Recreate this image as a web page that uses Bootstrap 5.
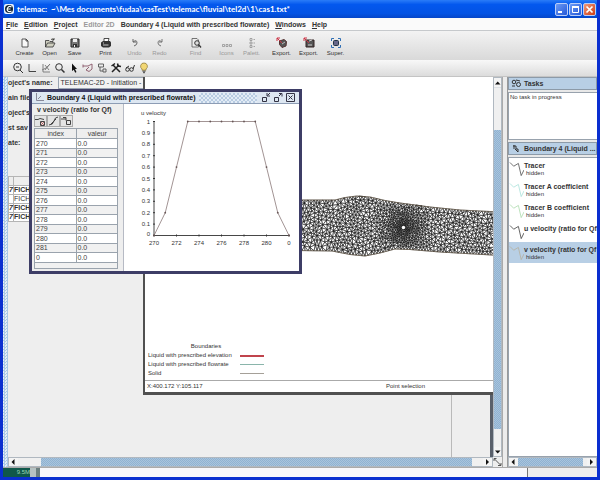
<!DOCTYPE html>
<html lang="en">
<head>
<meta charset="utf-8">
<meta name="viewport" content="width=device-width, initial-scale=1">
<title>telemac</title>
<link rel="stylesheet" href="https://cdn.jsdelivr.net/npm/bootstrap@5.3.0/dist/css/bootstrap.min.css">
<style>
  :root { --steel: #b8cfe5; --edge: #8a99a8; --frame: #3d3d66; --panel: #eeeeee; }
  body { font-family: "Liberation Sans", Arial, sans-serif; font-size: 7px; line-height: 9px; color: #333; background: var(--panel); }
  button, input { font-family: inherit; font-size: inherit; line-height: inherit; color: inherit; }
  button { background: none; border: 0; padding: 0; }
  svg { display: block; flex: none; }
  .app { height: 100vh; border: 3px solid #0a2fd0; border-top: 0; }
  .titlebar { height: 18px; margin: 0 -3px; padding: 0 4px; color: #fff; background: linear-gradient(#2a7cf8, #0358ee 25%, #0353e4 75%, #0546c8); }
  .titlebar h1 { font-family: Lato, "Liberation Sans", sans-serif; font-size: 8px; line-height: 12px; margin: 0 auto 0 3px; font-weight: bold; }
  .win-btns { gap: 1px; }
  .win-btn { width: 13px; height: 13px; border: 1px solid #b9cdf8; border-radius: 2px; background: linear-gradient(135deg, #6c9bf5, #2558d8); }
  .win-close { background: linear-gradient(135deg, #f09a7c, #cf3b12); }
  .menus { height: 13px; padding-left: 3px; gap: 6px; font-weight: bold; background: #fafafa; border-bottom: 1px solid #c6c9cc; }
  .menus u { text-underline-offset: 1px; }
  .dim { color: #999; }
  .tools { height: 29px; padding-left: 9px; background: linear-gradient(#f3f3f3, #d9d9d9); font-size: 6px; line-height: 8px; }
  .tools button { width: 25px; height: 29px; padding-top: 3px; }
  .tools .wide button { width: 27px; }
  .g6 { margin-left: 6px; } .g4 { margin-left: 4px; } .g11 { margin-left: 11px; }
  .minis { height: 17px; padding-left: 9px; background: linear-gradient(#f8f8f8, #dcdcdc); border-bottom: 1px solid #c4c4c4; }
  .minis button { width: 14px; height: 16px; }
  .grip { width: 5px; background: conic-gradient(#a9c9e6 25%, #e4eef6 0 50%, #a9c9e6 0 75%, #e4eef6 0) 0 0/3px 3px; }
  .desk { background: var(--panel); }
  .hatch { background: conic-gradient(#8fb2d2 25%, #a9c4dc 0 50%, #8fb2d2 0 75%, #a9c4dc 0) 0 0/2px 2px; }
  .sb { background: #f0f0f0; border: 1px solid #b0b8c0; }
  .sb button { background: #f4f4f4; }
  .hbar { height: 10px; } .hbar button { width: 9px; }
  .vbar { width: 9px; } .vbar button { height: 9px; }
  .split { width: 6px; background: #ececec; border-left: 1px solid #aaa; border-right: 1px solid #999; }
  .project { inset: 0; border-right: 3px solid #59606b; font-weight: bold; }
  .project .line { height: 15px; }
  .project .first { height: 11px; margin-bottom: 5px; gap: 6px; }
  .project input { height: 12px; width: 86px; border: 1px solid #9aa5b2; background: #f2f2f2; padding: 0 0 0 1px; }
  .files { width: 60px; border-collapse: collapse; margin-top: 23px; background: #fff; }
  .files th, .files td { height: 9px; line-height: 8px; padding: 0; border: 1px solid #b5b5b5; white-space: nowrap; }
  .files th { background: var(--panel); }
  .files .key { width: 5px; font-style: italic; }
  .plain { font-weight: normal; }
  .rule { left: 443px; top: 0; bottom: 0; width: 1px; background: #b9b9b9; }
  .view { left: 135px; right: 0; top: 0; height: 318px; background: #fff; border-left: 2px solid #505050; border-bottom: 3px solid #505050; font-size: 6px; line-height: 9px; }
  .mesh { width: 348px; height: 265px; }
  .legend { margin-left: 3px; width: 116px; }
  .legend i { width: 24px; height: 1px; background: #a5a098; }
  .legend i.elev { height: 2px; background: #c0444c; }
  .legend i.flow { background: #8ab5ab; }
  .viewbar { border-top: 1px solid #aaa; height: 12px; padding: 0 68px 0 2px; }
  .dialog { left: 21px; top: 12px; width: 273px; height: 185px; border: 3px solid var(--frame); background: #fff; }
  .dialog .cap { height: 12px; gap: 3px; padding: 0 3px; color: #111; background: #dde7f2; border-bottom: 1px solid #8d9db5; }
  .dialog h2, .side h2 { font-size: 7px; line-height: 10px; font-weight: bold; margin: 0; }
  .bumps { height: 10px; background: conic-gradient(#b8cce2 25%, #e3ecf6 0 50%, #b8cce2 0 75%, #e3ecf6 0) 0 0/4px 4px; }
  .cap button { width: 12px; height: 11px; }
  .data { width: 92px; background: var(--panel); border-right: 1px solid #b6bac4; padding: 1px 5px 0 2px; }
  .data h2 { padding-left: 3px; }
  .data button { width: 13px; height: 12px; border: 1px solid #aaa; background: #e4e4e4; }
  .values { width: 84px; border-collapse: collapse; margin-top: 1px; background: #fff; color: #444; }
  .values th, .values td { border: 1px solid #9aa3ad; padding: 0 0 0 1px; line-height: 8px; }
  .values th { background: var(--panel); font-weight: normal; text-align: center; line-height: 9px; }
  .values tr:nth-child(odd) td { line-height: 9px; }
  .values tr:nth-child(even) td { background: #f1f1f1; }
  .values .end td { height: 6px; background: var(--panel); }
  .side { width: 89px; background: #e8e8e8; }
  .side .head { height: 13px; padding-left: 2px; gap: 2px; background: var(--steel); border: 1px solid #8c9aa8; white-space: nowrap; }
  .side .box { background: #fff; border: 1px solid #98a2ad; border-right: 0; margin-top: 2px; }
  .tasks { height: 48px; margin-bottom: 2px; padding: 1px; font-size: 6px; line-height: 7px; }
  .curve { height: 21px; padding-top: 3px; text-align: left; white-space: nowrap; line-height: 9px; }
  .curve small { display: block; font-size: 6px; line-height: 7px; padding-left: 2px; }
  .curve b { display: block; }
  .curve.on { background: var(--steel); }
  .status { height: 10px; background: #f7f7fb; border-top: 1px solid #aaa; }
  .mem { width: 37px; background: #6c8080; color: #9fd6b8; font-size: 6px; }
  .mem .used { width: 27px; background: #10584a; } .mem .slack { width: 6px; background: #b6c2c2; }
  .tail { width: 70px; background: var(--panel); border-left: 1px solid #777; }
</style>
<script src="https://cdn.jsdelivr.net/npm/bootstrap@5.3.0/dist/js/bootstrap.bundle.min.js"></script>
</head>
<body>
<div class="app d-flex flex-column overflow-hidden">
  <header class="titlebar d-flex align-items-center flex-shrink-0">
    <svg width="10" height="10" viewBox="0 0 10 10"><rect width="10" height="10" rx="2" fill="#e8f0ff"/><circle cx="5" cy="5" r="4" fill="#123"/><path d="M7.500 3Q5 1.500 3.500 4 2.500 6.500 4.500 7.500 6 8 7.500 7M3.500 5h3" stroke="#fff" fill="none" stroke-width="1.200"/></svg>
    <h1 class="text-nowrap">telemac:&nbsp; ~\Mes documents\fudaa\casTest\telemac\fluvial\tel2d\1\cas1.txt*</h1>
    <div class="win-btns d-flex">
      <button class="win-btn" aria-label="Minimize"><svg width="11" height="11"><path d="M2 8h4" stroke="#fff" stroke-width="2"/></svg></button>
      <button class="win-btn" aria-label="Maximize"><svg width="11" height="11"><path d="M2.500 2.500v6h6v-6" stroke="#fff" fill="none"/><path d="M2 3h7" stroke="#fff" stroke-width="2"/></svg></button>
      <button class="win-btn win-close" aria-label="Close"><svg width="11" height="11"><path d="M2.500 2.500l6 6M8.500 2.500l-6 6" stroke="#fff" stroke-width="1.700"/></svg></button>
    </div>
  </header>
  <nav class="menus d-flex align-items-center flex-shrink-0 text-nowrap">
    <button class="fw-bold"><u>F</u>ile</button><button class="fw-bold"><u>E</u>dition</button><button class="fw-bold"><u>P</u>roject</button><button class="fw-bold dim">Editor 2D</button><button class="fw-bold">Boundary 4 (Liquid with prescribed flowrate)</button><button class="fw-bold"><u>W</u>indows</button><button class="fw-bold"><u>H</u>elp</button>
  </nav>
  <div class="tools d-flex flex-shrink-0">
    <div class="d-flex">
      <button><svg class="mx-auto" width="12" height="12" viewBox="0 0 12 12"><path d="M3 2h4l2 2v6H3zM7 2v2h2" fill="#f8f8f8" stroke="#333" stroke-width=".8"/></svg>Create</button>
      <button><svg class="mx-auto" width="12" height="12" viewBox="0 0 12 12"><path d="M1.500 10V3.500H5l1 1h3V6M1.500 10l2-4H11l-2 4zM7 2.500q2-1.500 3 .5M10 1v2H8" fill="#cfcfc0" stroke="#333" stroke-width=".8"/></svg>Open</button>
      <button><svg class="mx-auto" width="12" height="12" viewBox="0 0 12 12"><path d="M2 2h8v8H2z" fill="#777" stroke="#222"/><path d="M4 2h4v3H4z" fill="#eee"/><path d="M4 7h4v3H4z" fill="#333"/><path d="M5 8h1v2H5z" fill="#eee"/></svg>Save</button>
    </div>
    <div class="d-flex g6"><button><svg class="mx-auto" width="12" height="12" viewBox="0 0 12 12"><path d="M4 5V1.500h5L8 5" fill="#fff" stroke="#222" stroke-width=".8"/><path d="M1 5.500L3 4h7l1 1.500V9L9 10.500H3L1 9z" fill="#333"/><path d="M3 8h5.500M3 6h1" stroke="#eee" stroke-width=".8"/></svg>Print</button></div>
    <div class="d-flex g4 dim">
      <button><svg class="mx-auto" width="12" height="12" viewBox="0 0 12 12"><path d="M4 2v3h3M4 5q4-3 4 1 0 2-3 3" fill="none" stroke="#666"/></svg>Undo</button>
      <button><svg class="mx-auto" width="12" height="12" viewBox="0 0 12 12"><path d="M8 2v3H5M8 5Q4 2 4 6q0 2 3 3" fill="none" stroke="#777"/></svg>Redo</button>
    </div>
    <div class="d-flex g11 dim"><button><svg class="mx-auto" width="12" height="12" viewBox="0 0 12 12"><path d="M2 1.500h5l1.500 1.500v7H2z" fill="#eee" stroke="#555" stroke-width=".8"/><circle cx="7" cy="6" r="2.300" fill="#ddd" stroke="#333"/><path d="M8.500 7.500L11 10.500" stroke="#333" stroke-width="1.300"/></svg>Find</button></div>
    <div class="d-flex g6 dim">
      <button><svg class="mx-auto" width="12" height="12" viewBox="0 0 12 12"><path d="M1.500 7.500h2v2h-2zM5 7.500h2v2H5zM8.500 7.500h2v2h-2z" fill="none" stroke="#888" stroke-width=".7"/></svg>Icons</button>
      <button><svg class="mx-auto" width="12" height="12" viewBox="0 0 12 12"><path d="M4 1.500h2v2H4zM4 5h2v2H4zM4 8.500h2v2H4zM7.500 2.500H9M7.500 6H9M7.500 9.500H9" fill="none" stroke="#888" stroke-width=".7"/></svg>Palett.</button>
    </div>
    <div class="d-flex g4 wide">
      <button><svg class="mx-auto" width="12" height="12" viewBox="0 0 12 12"><path d="M3.500 4L8 2.500l2.500 2L10 9l-4 1.500-2.500-3z" fill="#555" stroke="#533"/><path d="M1 1l5 5M1 4V1h3" stroke="#c34" fill="none"/><path d="M6 7l3-2" stroke="#bbb"/></svg>Export.</button>
      <button><svg class="mx-auto" width="12" height="12" viewBox="0 0 12 12"><path d="M3 3h8v7H3z" fill="#555" stroke="#322"/><path d="M1 1l5 5M1 4V1h3" stroke="#c34" fill="none"/><path d="M6 4l3-1M5 8h4" stroke="#ccc"/></svg>Export.</button>
      <button><svg class="mx-auto" width="12" height="12" viewBox="0 0 12 12"><path d="M1.500 4V1.500H4M8 1.500h2.500V4M10.500 8v2.500H8M4 10.500H1.500V8" fill="none" stroke="#2f6fb5"/><rect x="3.500" y="3.500" width="5" height="5" rx="1" fill="#668" stroke="#234"/></svg>Super.</button>
    </div>
  </div>
  <div class="minis d-flex flex-shrink-0 align-items-center" role="toolbar">
    <button aria-label="Zoom region"><svg width="12" height="12" viewBox="0 0 12 12" fill="none" stroke="#333"><circle cx="5.500" cy="5" r="3.800"/><path d="M8 8l3 3M4 5h3"/></svg></button>
    <button aria-label="Axes"><svg width="12" height="12" viewBox="0 0 12 12" fill="none" stroke="#444"><path d="M3 2v7.500h7"/></svg></button>
    <button aria-label="Edit curve"><svg width="12" height="12" viewBox="0 0 12 12" fill="none" stroke="#777" stroke-width=".9"><path d="M3 2v8h7M2 8l4-2 4-4M5 3l4 5M5 8l5-6"/></svg></button>
    <button aria-label="Zoom"><svg width="12" height="12" viewBox="0 0 12 12" fill="none" stroke="#333"><circle cx="5" cy="5" r="3.300"/><path d="M7.500 7.500l3 3" stroke-width="1.500"/></svg></button>
    <button aria-label="Select"><svg width="12" height="12" viewBox="0 0 12 12"><path d="M4 1.500l5 5.500H7l1.500 3-1.300.7L5.800 7.700 4 9z" fill="#111"/></svg></button>
    <button aria-label="Polygon"><svg width="12" height="12" viewBox="0 0 12 12" fill="none" stroke="#856" stroke-width=".9"><path d="M1 4h5l4-2v5L7 9.500 4 8l3-3M1 2.500v3"/></svg></button>
    <button aria-label="Tree"><svg width="12" height="12" viewBox="0 0 12 12" fill="none" stroke="#555" stroke-width=".9"><path d="M2.500 2h5v3h-5zM4 5v4h3M7 7h3v3H7z"/></svg></button>
    <button aria-label="Settings"><svg width="12" height="12" viewBox="0 0 12 12" fill="none" stroke="#222" stroke-width="1.500"><path d="M2 10l7-7M3 3l7 7"/><path d="M1.500 4L5 1.500M7.500 1.500l.5 2.500 3 .5"/></svg></button>
    <button aria-label="View"><svg width="12" height="12" viewBox="0 0 12 12" fill="none" stroke="#333"><circle cx="3.500" cy="7.500" r="1.800"/><circle cx="7.500" cy="7.500" r="1.800"/><path d="M2 6l3-2M9 7l1.500-4"/></svg></button>
    <button aria-label="Hint"><svg width="12" height="12" viewBox="0 0 12 12"><path d="M6 1a3.300 3.300 0 0 1 2 6v1.200H4V7a3.300 3.300 0 0 1 2-6z" fill="#f2d774" stroke="#86712c" stroke-width=".7"/><path d="M4.500 9.200h3M5 10.700h2" stroke="#444"/></svg></button>
  </div>

  <main class="d-flex flex-grow-1 overflow-hidden">
    <div class="grip flex-shrink-0"></div>
    <div class="d-flex flex-column flex-grow-1 overflow-hidden">
      <div class="d-flex flex-grow-1 overflow-hidden">
        <div class="desk position-relative flex-grow-1 overflow-hidden">
          <section class="project position-absolute overflow-hidden">
            <div class="first d-flex align-items-center text-nowrap"><label for="pname">oject's name:</label><input id="pname" value="TELEMAC-2D - Initiation -"></div>
            <div class="line">ain file</div><div class="line">oject's</div><div class="line">st sav</div><div class="line">ate:</div>
            <table class="files">
              <tr><th class="key"></th><th></th></tr>
              <tr><td class="key">7</td><td>FICH</td></tr>
              <tr><td class="key"></td><td class="plain">FICH</td></tr>
              <tr><td class="key">7</td><td>FICH</td></tr>
              <tr><td class="key">7</td><td>FICH</td></tr>
            </table>
            <div class="rule position-absolute"></div>
          </section>

          <section class="view position-absolute d-flex flex-column overflow-hidden">
            <svg class="mesh" viewBox="145 77 348 265"><path id="mesh" fill="none" stroke="#1c1c1c" stroke-width=".5"/><path id="banks" fill="none" stroke="#6f5f4c" stroke-width=".6"/><circle cx="403.500" cy="227.500" r="1.700" fill="#fff"/></svg>
            <div class="legend flex-grow-1">
              <div class="text-center">Boundaries</div>
              <div class="d-flex justify-content-between align-items-center text-nowrap">Liquid with prescribed elevation<i class="elev"></i></div>
              <div class="d-flex justify-content-between align-items-center text-nowrap">Liquid with prescribed flowrate<i class="flow"></i></div>
              <div class="d-flex justify-content-between align-items-center text-nowrap">Solid<i></i></div>
            </div>
            <div class="viewbar d-flex align-items-center justify-content-between text-nowrap flex-shrink-0"><span>X:400.172 Y:105.117</span><span>Point selection</span></div>
          </section>

          <section class="dialog position-absolute d-flex flex-column">
            <div class="cap d-flex align-items-center flex-shrink-0">
              <svg width="9" height="9" viewBox="0 0 9 9" fill="none" stroke="#889"><path d="M1.500 0v7.500H9M3 6l3-3"/></svg>
              <h2 class="text-nowrap">Boundary 4 (Liquid with prescribed flowrate)</h2>
              <div class="bumps flex-grow-1"></div>
              <div class="d-flex">
                <button aria-label="Iconify"><svg width="11" height="11" viewBox="0 0 11 11" fill="none" stroke="#334"><path d="M2.500 5.500h4v4h-4zM10 1L7.500 3.500M7 1v3h3"/></svg></button>
                <button aria-label="Maximize"><svg width="11" height="11" viewBox="0 0 11 11" fill="none" stroke="#334"><path d="M2.500 5.500h4v4h-4zM7 4l2.500-2.500M7 1.500h3v3"/></svg></button>
                <button aria-label="Close"><svg class="ms-auto" width="11" height="11" viewBox="0 0 11 11" fill="none" stroke="#334"><path d="M1.500 1.500h8v8h-8zM3.500 3.500l4 4M7.500 3.500l-4 4"/></svg></button>
              </div>
            </div>
            <div class="d-flex flex-grow-1 overflow-hidden">
              <div class="data flex-shrink-0">
                <h2 class="text-nowrap">v velocity (ratio for Qf)</h2>
                <div class="d-flex">
                  <button aria-label="Remove"><svg width="11" height="10" viewBox="0 0 11 10" fill="none" stroke="#444"><path d="M0 3.500h3l2-1 4 1M5.500 5.500h4v4h-4z"/><path d="M6 6l3 3M9 6L6 9" stroke="#a44" stroke-width=".7"/></svg></button>
                  <button aria-label="Curve"><svg width="11" height="10" viewBox="0 0 11 10" fill="none" stroke="#444"><path d="M1 9q4 0 5-4t4-4M3 8l5-5"/></svg></button>
                  <button aria-label="Add"><svg width="11" height="10" viewBox="0 0 11 10" fill="none" stroke="#444"><path d="M0 3h5M2 1.500h3v3M5.500 4.500h4v4h-4z"/></svg></button>
                </div>
                <table class="values">
                  <thead><tr><th scope="col" class="w-50">index</th><th scope="col">valeur</th></tr></thead>
                  <tbody>
                    <tr><td>270</td><td>0.0</td></tr><tr><td>271</td><td>0.0</td></tr><tr><td>272</td><td>0.0</td></tr>
                    <tr><td>273</td><td>0.0</td></tr><tr><td>274</td><td>0.0</td></tr><tr><td>275</td><td>0.0</td></tr>
                    <tr><td>276</td><td>0.0</td></tr><tr><td>277</td><td>0.0</td></tr><tr><td>278</td><td>0.0</td></tr>
                    <tr><td>279</td><td>0.0</td></tr><tr><td>280</td><td>0.0</td></tr><tr><td>281</td><td>0.0</td></tr>
                    <tr><td>0</td><td>0.0</td></tr><tr class="end"><td colspan="2"></td></tr>
                  </tbody>
                </table>
              </div>
              <svg id="plot" class="flex-grow-1" viewBox="124 104 175 167" width="175" height="167" font-size="6" fill="#333"></svg>
            </div>
          </section>
        </div>
        <div class="sb vbar d-flex flex-column flex-shrink-0">
          <button aria-label="Scroll up"><svg width="7" height="8"><path d="M1 5.500h5.500L3.700 2.500z" fill="#111"/></svg></button>
          <div class="border-top" style="flex: 42"></div><div class="hatch" style="flex: 302"></div><div style="flex: 18"></div>
          <button aria-label="Scroll down"><svg width="7" height="8"><path d="M1 2.500h5.500L3.700 5.500z" fill="#111"/></svg></button>
        </div>
      </div>
      <div class="d-flex flex-shrink-0">
        <div class="sb hbar d-flex flex-grow-1">
          <button aria-label="Scroll left"><svg width="8" height="8"><path d="M5.500 1v6L2.500 4z" fill="#111"/></svg></button>
          <div style="flex: 23"></div><div class="hatch" style="flex: 432"></div><div style="flex: 11"></div>
          <button aria-label="Scroll right"><svg width="8" height="8"><path d="M3 1v6l3-3z" fill="#111"/></svg></button>
        </div>
        <svg width="9" height="10" viewBox="0 0 9 10" fill="none" stroke="#444" stroke-width=".9"><path d="M1.500 2l6 6M1 4V1.500h2.500M5 8.500h3V6"/></svg>
      </div>
    </div>
    <div class="split flex-shrink-0"></div>
    <aside class="side d-flex flex-column flex-shrink-0 overflow-hidden">
      <div class="head d-flex align-items-center flex-shrink-0"><svg width="11" height="9" viewBox="0 0 11 9" fill="none" stroke="#333"><circle cx="3" cy="3" r="1.800"/><circle cx="7.500" cy="5.500" r="2"/><path d="M1 7h3M5 1l4 1"/></svg><h2>Tasks</h2></div>
      <div class="box tasks flex-shrink-0">No task in progress</div>
      <div class="head d-flex align-items-center flex-shrink-0"><svg width="11" height="9" viewBox="0 0 11 9" fill="none" stroke="#333"><path d="M2 2h3v3h2v3M7 8L4 5M3 1v4"/></svg><h2>Boundary 4 (Liquid ...</h2></div>
      <div id="curves" class="box d-flex flex-column flex-grow-1 overflow-hidden"></div>
      <div class="sb hbar d-flex flex-shrink-0">
        <button aria-label="Scroll left"><svg width="8" height="8"><path d="M5.500 1v6L2.500 4z" fill="#111"/></svg></button>
        <div class="hatch" style="flex: 66"></div><div style="flex: 4"></div>
        <button aria-label="Scroll right"><svg width="8" height="8"><path d="M3 1v6l3-3z" fill="#111"/></svg></button>
      </div>
    </aside>
  </main>
  <footer class="status d-flex flex-shrink-0">
    <div class="mem d-flex"><div class="used text-end">9.5M</div><div class="slack"></div></div>
    <div class="tail ms-auto"></div>
  </footer>
</div>
<script>
// Curve list of the side panel.
const curves = [['Tracer', '#444', 1], ['Tracer A coefficient', '#a5e0d8', 1], ['Tracer B coefficient', '#a8d8a8', 1], ['u velocity (ratio for Qf', '#333', 0], ['v velocity (ratio for Qf', '#b5ad98', 1]];
document.getElementById('curves').innerHTML = curves.map(([name, ink, hid], i) =>
  `<button class="curve d-flex flex-shrink-0${i === 4 ? ' on' : ''}"><svg width="15" height="17" viewBox="0 0 16 17" fill="none" stroke="${ink}" stroke-width=".8"><path d="M1 1l4 4 5-3 3 13 3-6"/></svg><span><b>${name}</b>${hid ? '<small>hidden</small>' : ''}</span></button>`).join('');

// Velocity profile.
const X = i => 154 + i * 11.25, Y = v => 235.5 - v * 114;
const vals = [0, .2, .6, 1, 1, 1, 1, 1, 1, 1, .6, .2, 0];
let p = `<text x="141" y="115">u velocity</text><path d="M154 121V235.500H290" fill="none" stroke="#333" stroke-width=".9"/>`;
for (let k = 0; k <= 10; k++) p += `<text x="150" y="${Y(k / 10) + (k ? 2 : 0)}" text-anchor="end">${k === 0 ? 0 : k === 10 ? 1 : '0.' + k}</text><path d="M153 ${Y(k / 10)}h2" stroke="#333"/>`;
['270', '272', '274', '276', '278', '280', '0'].forEach((t, k) => p += `<text x="${X(2 * k)}" y="245" text-anchor="middle">${t}</text><path d="M${X(2 * k)} 234.500v2" stroke="#333"/>`);
p += `<polyline points="${vals.map((v, i) => X(i) + ',' + Y(v)).join(' ')}" fill="none" stroke="#8a7878" stroke-width=".8"/>` + vals.map((v, i) => `<circle cx="${X(i)}" cy="${Y(v)}" r=".9" fill="#655"/>`).join('');
document.getElementById('plot').innerHTML = p;

// River mesh: Delaunay triangulation, refined around the pier.
const top_ = [[296,200],[335,200],[345,197.500],[357,196],[370,197],[385,200.500],[400,203],[430,207],[460,210],[500,212]];
const bot_ = [[296,250.500],[332,251],[350,254.500],[365,256],[380,253],[395,249],[410,249.500],[440,252],[500,255.500]];
const at = (L, x) => { for (let i = 1; i < L.length; i++) if (x <= L[i][0]) { const [a, b] = L[i - 1], [c, d] = L[i]; return b + (d - b) * (x - a) / (c - a); } return L[L.length - 1][1]; };
let seed = 7; const rnd = () => (seed = (seed * 16807) % 2147483647) / 2147483647;
const pts = [];
for (let x = 296; x <= 499; x += 3) pts.push([x, at(top_, x)], [x, at(bot_, x)]);
for (let n = 0; n < 30000; n++) {
  const x = 296 + rnd() * 204, y = 195 + rnd() * 62, near = rnd() < .3;
  const q = near ? [403.5 + (x - 398) * .15, 227.5 + (y - 226) * .5] : [x, y];
  const d = Math.hypot(q[0] - 403.5, q[1] - 227.5), r = Math.min(3, 1 + d * .06);
  if (d < 1.6 || q[1] < at(top_, q[0]) + 1.5 || q[1] > at(bot_, q[0]) - 1.5) continue;
  if (pts.every(a => Math.hypot(a[0] - q[0], a[1] - q[1]) > r)) pts.push(q);
}
const n = pts.length, P = pts.map(a => [a[0] + rnd() * .01, a[1] + rnd() * .01]).concat([[-2000, -2000], [3000, -2000], [400, 4000]]);
const tri = (a, b, c) => {
  const [ax, ay] = P[a], [bx, by] = P[b], [cx, cy] = P[c], D = 2 * (ax * (by - cy) + bx * (cy - ay) + cx * (ay - by));
  const A = ax * ax + ay * ay, B = bx * bx + by * by, C = cx * cx + cy * cy;
  const x = (A * (by - cy) + B * (cy - ay) + C * (ay - by)) / D, y = (A * (cx - bx) + B * (ax - cx) + C * (bx - ax)) / D;
  return { v: [a, b, c], x, y, r: (ax - x) ** 2 + (ay - y) ** 2 };
};
let T = [tri(n, n + 1, n + 2)];
for (let i = 0; i < n; i++) {
  const [x, y] = P[i], keep = [], E = new Map();
  for (const t of T) {
    if ((x - t.x) ** 2 + (y - t.y) ** 2 < t.r) {
      for (const [a, b] of [[0, 1], [1, 2], [2, 0]]) {
        const u = Math.min(t.v[a], t.v[b]), w = Math.max(t.v[a], t.v[b]), k = u * 10000 + w;
        E.has(k) ? E.delete(k) : E.set(k, [u, w]);
      }
    } else keep.push(t);
  }
  for (const [u, w] of E.values()) keep.push(tri(u, w, i));
  T = keep;
}
let d = '';
for (const t of T) {
  if (t.v.some(v => v >= n)) continue;
  const g = t.v.map(v => P[v]), cx = (g[0][0] + g[1][0] + g[2][0]) / 3, cy = (g[0][1] + g[1][1] + g[2][1]) / 3;
  if (cy < at(top_, cx) || cy > at(bot_, cx)) continue;
  d += 'M' + g.map(a => a[0].toFixed(1) + ' ' + a[1].toFixed(1)).join('L') + 'Z';
}
document.getElementById('mesh').setAttribute('d', d);
document.getElementById('banks').setAttribute('d', 'M' + top_.join('L') + 'M' + bot_.join('L'));
</script>
</body>
</html>
